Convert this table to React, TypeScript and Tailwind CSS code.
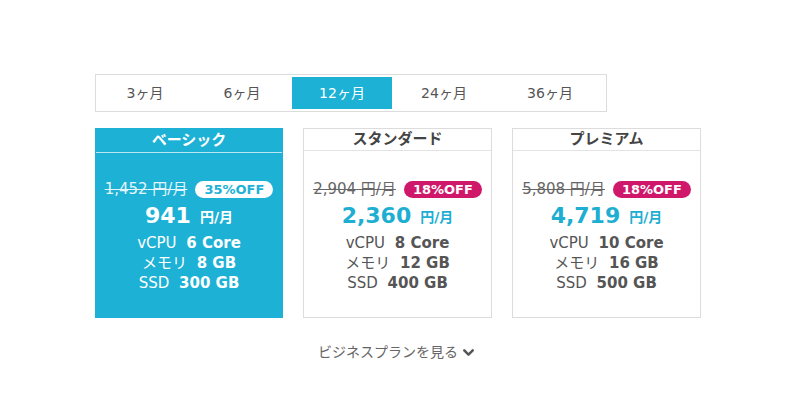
import { ChevronDown } from 'lucide-react';

const tabs = [
  { label: '3ヶ月', w: 'w-[94px]' },
  { label: '6ヶ月', w: 'w-[100px]' },
  { label: '12ヶ月', w: 'w-[100px]' },
  { label: '24ヶ月', w: 'w-[104px]' },
  { label: '36ヶ月', w: 'w-[108px]' },
];

const plans = [
  { name: 'ベーシック', old: '1,452', off: '35%OFF', price: '941', cpu: '6 Core', mem: '8 GB', ssd: '300 GB', active: true },
  { name: 'スタンダード', old: '2,904', off: '18%OFF', price: '2,360', cpu: '8 Core', mem: '12 GB', ssd: '400 GB', active: false },
  { name: 'プレミアム', old: '5,808', off: '18%OFF', price: '4,719', cpu: '10 Core', mem: '16 GB', ssd: '500 GB', active: false },
];

function PlanCard({ plan }: { plan: (typeof plans)[number] }) {
  const a = plan.active;
  return (
    <div
      className={
        a
          ? 'w-[188px] h-[190px] bg-[#1cb1d5] text-white border border-[#1cb1d5]'
          : 'w-[189px] h-[190px] bg-white text-[#555] border border-[#dcdcdc]'
      }
    >
      <div
        className={
          a
            ? 'h-[24px] leading-[23px] text-center text-[15px] font-bold border-b border-[#b9e8f3]'
            : 'h-[22px] leading-[21px] text-center text-[15px] font-bold text-[#444] border-b border-[#e3e3e3]'
        }
      >
        {plan.name}
      </div>
      <div className={a ? 'flex flex-col items-center pt-[28px]' : 'flex flex-col items-center pt-[30px]'}>
        <div className="flex items-center gap-[8px] h-[17px]">
          <span className={a ? 'text-[15px] line-through text-[#e3f5fa]' : 'text-[15px] line-through text-[#666]'}>
            {plan.old} 円/月
          </span>
          <span
            className={
              a
                ? 'h-[17px] px-[9px] rounded-full bg-white text-[#1cb1d5] text-[13px] font-bold leading-[17px]'
                : 'h-[17px] px-[9px] rounded-full bg-[#d0186b] text-white text-[13px] font-bold leading-[17px]'
            }
          >
            {plan.off}
          </span>
        </div>
        <div className="h-[35px] flex items-center">
          <span className={a ? 'text-[22px] font-bold text-white' : 'text-[22px] font-bold text-[#1eaed2]'}>{plan.price}</span>
          <span className={a ? 'ml-[9px] mt-[4px] text-[14px] font-bold text-white' : 'ml-[9px] mt-[4px] text-[14px] font-bold text-[#1eaed2]'}>
            円/月
          </span>
        </div>
        <div className="flex flex-col items-center text-[15px] leading-[20px]">
          <div>
            vCPU <span className="ml-[5px] font-bold">{plan.cpu}</span>
          </div>
          <div>
            メモリ <span className="ml-[5px] font-bold">{plan.mem}</span>
          </div>
          <div>
            SSD <span className="ml-[5px] font-bold">{plan.ssd}</span>
          </div>
        </div>
      </div>
    </div>
  );
}

export default function App() {
  return (
    <div
      className="w-[800px] h-[420px] bg-white pt-[74px] pl-[95px]"
      style={{ fontFamily: '"DejaVu Sans", "Noto Sans CJK JP", sans-serif' }}
    >
      <div className="w-[512px] h-[38px] border border-[#dcdcdc] p-[2px] flex">
        {tabs.map((t, i) => (
          <div
            key={t.label}
            className={
              i === 2
                ? `${t.w} h-full flex items-center justify-center bg-[#1cb1d5] text-white text-[14px]`
                : `${t.w} h-full flex items-center justify-center text-[#555] text-[14px]`
            }
          >
            {t.label}
          </div>
        ))}
      </div>
      <div className="mt-[16px] flex items-start gap-[20px]">
        {plans.map((p) => (
          <PlanCard key={p.name} plan={p} />
        ))}
      </div>
      <div className="w-[605px] mt-[24px] flex items-center justify-center text-[14px] text-[#666]">
        ビジネスプランを見る
        <ChevronDown className="ml-[2px] w-[17px] h-[17px] text-[#555]" strokeWidth={3.5} />
      </div>
    </div>
  );
}
